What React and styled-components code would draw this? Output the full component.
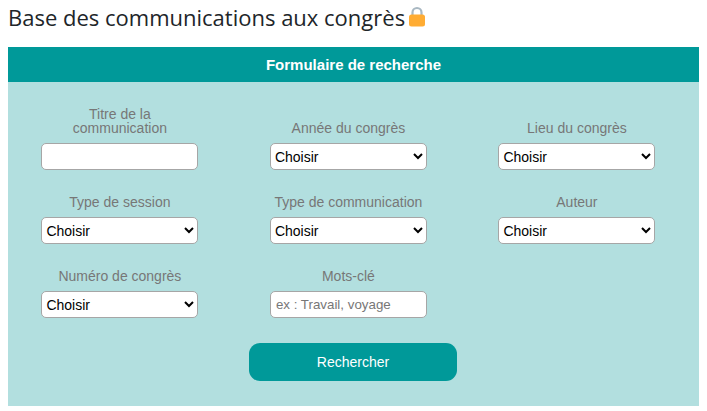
import React from 'react';
import styled, { createGlobalStyle } from 'styled-components';

const GlobalStyle = createGlobalStyle`
  html, body {
    margin: 0;
    padding: 0;
    background: #fff;
    font-family: "Liberation Sans", Arial, sans-serif;
  }
`;

const Page = styled.div`
  padding: 0 8px;
`;

const Title = styled.h1`
  display: flex;
  align-items: center;
  margin: 0;
  height: 47px;
  padding-bottom: 14px;
  box-sizing: border-box;
  font-family: "Open Sans", sans-serif;
  font-size: 22px;
  font-weight: 400;
  color: #212529;
`;

const LockIcon = styled.svg`
  width: 18px;
  height: 21px;
  margin-left: 3px;
`;

const Panel = styled.form`
  background: #b2dfdf;
  margin: 0;
  height: 359px;
`;

const PanelHeader = styled.div`
  background: #009999;
  color: #fff;
  height: 35px;
  line-height: 35px;
  text-align: center;
  font-size: 15px;
  font-weight: 700;
`;

const Fields = styled.div`
  display: grid;
  grid-template-columns: repeat(3, 157px);
  column-gap: 71.5px;
  grid-auto-rows: 47px;
  row-gap: 27px;
  padding: 41px 33.4px 0;
`;

const Field = styled.div`
  display: flex;
  flex-direction: column;
  justify-content: flex-end;
  gap: 8px;
`;

const Label = styled.label`
  flex-shrink: 0;
  color: #777;
  font-size: 14px;
  line-height: 14px;
  text-align: center;
`;

const Select = styled.select`
  flex-shrink: 0;
  width: 157px;
  height: 27px;
  box-sizing: border-box;
  border: 1px solid #a6a6a6;
  border-radius: 5px;
  background: #fff;
  color: #000;
  font-family: "Liberation Sans", Arial, sans-serif;
  font-size: 14px;
`;

const Input = styled.input`
  flex-shrink: 0;
  width: 157px;
  height: 27px;
  box-sizing: border-box;
  border: 1px solid #a6a6a6;
  border-radius: 5px;
  background: #fff;
  padding: 0 5px;
  font-family: "Liberation Sans", Arial, sans-serif;
  font-size: 13.33px;

  &::placeholder {
    color: #777;
    opacity: 1;
  }
`;

const Actions = styled.div`
  display: flex;
  justify-content: center;
  padding-top: 25px;
  padding-right: 1px;
`;

const SearchButton = styled.button`
  width: 208px;
  height: 38px;
  border: 0;
  border-radius: 11px;
  background: #009999;
  color: #fff;
  font-family: "Liberation Sans", Arial, sans-serif;
  font-size: 14px;
`;

const SelectField = ({ label }) => (
  <Field>
    <Label>{label}</Label>
    <Select defaultValue="">
      <option value="">Choisir</option>
    </Select>
  </Field>
);

const InputField = ({ label, placeholder }) => (
  <Field>
    <Label>{label}</Label>
    <Input type="text" placeholder={placeholder} />
  </Field>
);

const App = () => (
  <Page>
    <GlobalStyle />
    <Title>
      Base des communications aux congrès
      <LockIcon viewBox="0 0 18 21" aria-hidden="true">
        <path d="M4.5 10V6.5a4.5 4.5 0 0 1 9 0V10" fill="none" stroke="#a9b8c2" strokeWidth="2.2" />
        <rect x="1" y="8.5" width="16" height="12" rx="2.5" fill="#ffac33" />
      </LockIcon>
    </Title>
    <Panel onSubmit={(e) => e.preventDefault()}>
      <PanelHeader>Formulaire de recherche</PanelHeader>
      <Fields>
        <InputField label="Titre de la communication" />
        <SelectField label="Année du congrès" />
        <SelectField label="Lieu du congrès" />
        <SelectField label="Type de session" />
        <SelectField label="Type de communication" />
        <SelectField label="Auteur" />
        <SelectField label="Numéro de congrès" />
        <InputField label="Mots-clé" placeholder="ex : Travail, voyage" />
      </Fields>
      <Actions>
        <SearchButton type="submit">Rechercher</SearchButton>
      </Actions>
    </Panel>
  </Page>
);

export default App;
